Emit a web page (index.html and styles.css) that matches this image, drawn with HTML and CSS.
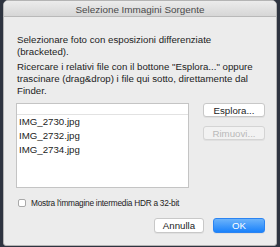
FILE: index.html
```html
<!DOCTYPE html>
<html lang="it">
  <head>
    <meta charset="UTF-8" />
    <title>Selezione Immagini Sorgente</title>
    <link rel="stylesheet" href="styles.css">
  </head>
  <body>
    <div class="window">
      <header class="titlebar">Selezione Immagini Sorgente</header>

      <div class="content">
        <p class="intro">Selezionare foto con esposizioni differenziate (bracketed).</p>
        <p class="intro">
          Ricercare i relativi file con il bottone "Esplora..." oppure
          trascinare (drag&amp;drop) i file qui sotto, direttamente dal Finder.
        </p>

        <div class="file-row">
          <div class="file-list">
            <div class="file-list-header"></div>
            <div class="file-item">IMG_2730.jpg</div>
            <div class="file-item">IMG_2732.jpg</div>
            <div class="file-item">IMG_2734.jpg</div>
          </div>
          <div class="side-buttons">
            <button class="button">Esplora...</button>
            <button class="button" disabled>Rimuovi...</button>
          </div>
        </div>

        <label class="checkbox-group">
          <span class="checkbox"></span>
          Mostra l'immagine intermedia HDR a 32-bit
        </label>

        <div class="actions">
          <button class="button button-cancel">Annulla</button>
          <button class="button button-primary">OK</button>
        </div>
      </div>
    </div>
  </body>
</html>
```

FILE: styles.css
```css
:root {
  --window-bg: #ececec;
  --text-primary: #1c1c1c;
  --text-disabled: #b9b9b9;
  --border: #c4c4c4;
}

* {
  margin: 0;
  padding: 0;
  box-sizing: border-box;
}

body {
  background: #2e3440;
  font-family: "Liberation Sans", Arial, sans-serif;
  font-size: 9.7px;
  color: var(--text-primary);
  width: 280px;
  height: 247px;
  overflow: hidden;
}

.window {
  margin-left: 3px;
  width: 274px;
  height: 246px;
  background: var(--window-bg);
  border: 1px solid #b4b4b4;
  border-radius: 5px 5px 3px 3px;
  overflow: hidden;
}

.titlebar {
  height: 16px;
  line-height: 17px;
  text-align: center;
  color: #4a4a4a;
  font-size: 9.9px;
  background: linear-gradient(#ececec, #d6d6d6);
  border-bottom: 1px solid #b9b9b9;
}

.content {
  padding: 17px 11px 0 12px;
}

.intro {
  line-height: 12px;
  margin-bottom: 3px;
  padding-left: 1px;
}

.intro + .intro {
  margin-bottom: 6px;
}

.file-row {
  display: flex;
  justify-content: space-between;
}

.file-list {
  width: 173px;
  height: 85px;
  background: #fff;
  border: 1px solid var(--border);
}

.file-list-header {
  height: 11px;
  border-bottom: 1px solid #e2e2e2;
}

.file-item {
  height: 14px;
  line-height: 14px;
  padding-left: 2px;
}

.side-buttons {
  display: flex;
  flex-direction: column;
  gap: 9px;
  width: 62px;
}

.button {
  height: 14px;
  font-family: inherit;
  font-size: 9.7px;
  color: var(--text-primary);
  background: #fff;
  border: 1px solid #c8c8c8;
  border-radius: 3px;
  box-shadow: 0 1px 0 rgba(0, 0, 0, 0.05);
}

.button:disabled {
  color: var(--text-disabled);
  background: #f2f2f2;
  border-color: #d4d4d4;
}

.checkbox-group {
  display: flex;
  align-items: center;
  gap: 5px;
  height: 11px;
  margin-top: 9px;
  padding-left: 2px;
  font-size: 8.3px;
  letter-spacing: -0.25px;
}

.checkbox {
  width: 8px;
  height: 8px;
  background: #fff;
  border: 1px solid #a9a9a9;
  border-radius: 2px;
}

.actions {
  display: flex;
  justify-content: flex-end;
  gap: 9px;
  margin-top: 10px;
}

.button-cancel {
  width: 50px;
  height: 15px;
}

.button-primary {
  width: 52px;
  height: 15px;
  color: #fff;
  border-color: #2b84f2;
  background: linear-gradient(#6cb3fa, #1a82fb);
}
```
